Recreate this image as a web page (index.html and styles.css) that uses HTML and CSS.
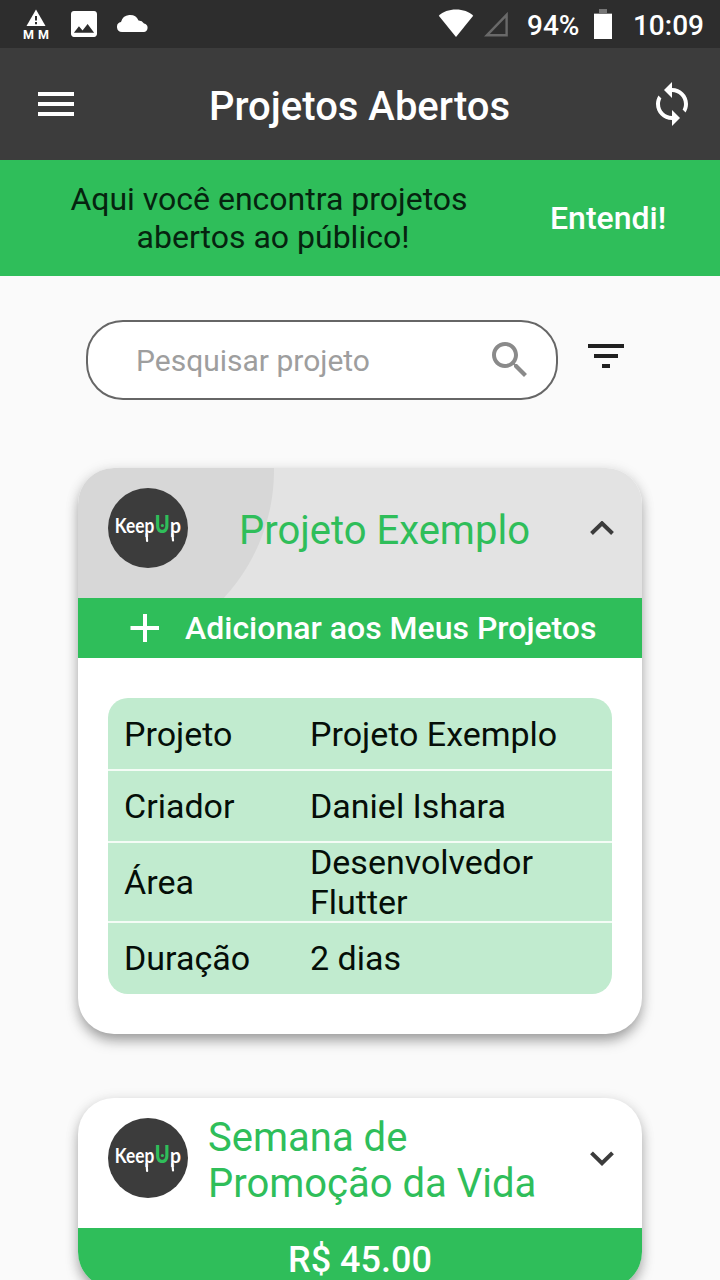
FILE: index.html
```html
<!DOCTYPE html>
<html lang="pt-BR">
<head>
<meta charset="utf-8">
<title>Projetos Abertos</title>
<link rel="stylesheet" href="styles.css">
</head>
<body>
<div class="screen">
  <div class="status">
    <svg class="alert" width="28" height="38" viewBox="0 -2 28 38">
      <path d="M14 .5 23.500 17h-19z" fill="#fff"/>
      <path d="M14 7v4.500M14 13v2.200" stroke="#2d2d2d" stroke-width="2"/>
      <text x="1" y="29.500" textLength="26">MM</text>
    </svg>
    <svg class="photo" width="26" height="26" viewBox="3 3 18 18"><path fill="#fff" d="M21 19V5c0-1.100-.9-2-2-2H5c-1.100 0-2 .9-2 2v14c0 1.100.9 2 2 2h14c1.100 0 2-.9 2-2zM8.500 13.500l2.500 3.010L14.500 12l4.500 6H5l3.500-4.500z"/></svg>
    <svg class="cloud" width="32" height="18" viewBox="0 0 32 18"><path fill="#fff" d="M5 18a5 5 0 0 1-1-9.900A9.300 9.300 0 0 1 21.500 6.500 6.300 6.300 0 0 1 27 9.400a4.400 4.400 0 0 1 .2 8.600z"/></svg>
    <svg class="wifi" width="36" height="28" viewBox="0 0 36 28"><path fill="#fff" d="M18 28 .8 6.700C5 2.700 11 .5 18 .5s13 2.200 17.200 6.200z"/></svg>
    <svg class="signal" width="24" height="25" viewBox="0 0 24 25"><path d="M22.600 2.800v20.500H2.800z" fill="none" stroke="#696969" stroke-width="2.400"/></svg>
    <span class="percent">94%</span>
    <svg class="battery" width="18" height="30" viewBox="0 0 18 30"><path fill="#767676" d="M5 0h8v4h5v2H0V4h5z"/><path fill="#fff" d="M0 5h18v25H0z"/></svg>
    <span class="clock">10:09</span>
  </div>
  <header class="appbar">
    <svg class="menu" width="36" height="24" viewBox="0 0 36 24"><path fill="#fff" d="M0 0h36v4H0zM0 10h36v4H0zM0 20h36v4H0z"/></svg>
    <h1>Projetos Abertos</h1>
    <svg width="48" height="48" viewBox="0 0 24 24"><path transform="matrix(-1 0 0 1 24 0)" fill="#fff" d="M12 4V1l4 4-4 4V6c-3.310 0-6 2.690-6 6 0 1.010.25 1.970.7 2.800l-1.460 1.460C4.460 15.030 4 13.570 4 12c0-4.420 3.580-8 8-8zm0 14c3.310 0 6-2.690 6-6 0-1.010-.25-1.970-.7-2.800l1.460-1.460C19.540 8.970 20 10.430 20 12c0 4.420-3.580 8-8 8v3l-4-4 4-4v3z"/></svg>
  </header>
  <div class="banner">
    <p>Aqui você encontra projetos<br><span>abertos ao público!</span></p>
    <b>Entendi!</b>
  </div>
  <div class="tools">
    <div class="search">
      <span>Pesquisar projeto</span>
      <svg width="48" height="48" viewBox="0 0 24 24"><path fill="#8a8a8a" d="M15.500 14h-.79l-.28-.27C15.410 12.590 16 11.110 16 9.500 16 5.910 13.090 3 9.500 3S3 5.910 3 9.500 5.910 16 9.500 16c1.610 0 3.090-.59 4.230-1.570l.27.28v.79l5 4.990L20.490 19l-4.990-5zm-6 0C7.010 14 5 11.990 5 9.500S7.010 5 9.500 5 14 7.010 14 9.500 11.990 14 9.500 14z"/></svg>
    </div>
    <svg width="36" height="24" viewBox="0 0 36 24"><path fill="#202020" d="M0 0h36v4H0zM6 10h24v4H6zM14 20h8v4h-8z"/></svg>
  </div>
  <article class="card">
    <div class="head pressed">
      <svg class="logo" viewBox="0 0 80 80">
        <circle cx="40" cy="40" r="40" fill="#3c3c3c"/>
        <text x="6.800" y="44.500" textLength="39.500" lengthAdjust="spacingAndGlyphs">Keep</text>
        <text class="logo-u" x="46.800" y="44.500" textLength="15" lengthAdjust="spacingAndGlyphs">U</text>
        <text x="62" y="44.500" textLength="11" lengthAdjust="spacingAndGlyphs">p</text>
        <path d="M38.600 46l.5 7M64.400 46l.6 6.500" stroke="#fff" stroke-width="2.200" stroke-linecap="round"/>
        <circle cx="54.400" cy="37.500" r="1.600" fill="#2fbe5a"/>
      </svg>
      <h2>Projeto Exemplo</h2>
      <svg width="24" height="15" viewBox="0 0 24 15"><path d="m1.500 12.500 10.500-10.200 10.500 10.200" fill="none" stroke="#3c3c3c" stroke-width="4"/></svg>
    </div>
    <div class="strip add">
      <svg width="29" height="28" viewBox="0 0 29 28"><path d="M15 0v28M.5 14h28.500" stroke="#fff" stroke-width="4"/></svg>
      <span>Adicionar aos Meus Projetos</span>
    </div>
    <dl class="details">
      <div class="first"><dt>Projeto</dt><dd>Projeto Exemplo</dd></div>
      <div><dt>Criador</dt><dd>Daniel Ishara</dd></div>
      <div class="tall"><dt>Área</dt><dd>Desenvolvedor<br>Flutter</dd></div>
      <div><dt>Duração</dt><dd>2 dias</dd></div>
    </dl>
  </article>
  <article class="card">
    <div class="head">
      <svg class="logo" viewBox="0 0 80 80">
        <circle cx="40" cy="40" r="40" fill="#3c3c3c"/>
        <text x="6.800" y="44.500" textLength="39.500" lengthAdjust="spacingAndGlyphs">Keep</text>
        <text class="logo-u" x="46.800" y="44.500" textLength="15" lengthAdjust="spacingAndGlyphs">U</text>
        <text x="62" y="44.500" textLength="11" lengthAdjust="spacingAndGlyphs">p</text>
        <path d="M38.600 46l.5 7M64.400 46l.6 6.500" stroke="#fff" stroke-width="2.200" stroke-linecap="round"/>
        <circle cx="54.400" cy="37.500" r="1.600" fill="#2fbe5a"/>
      </svg>
      <h2 class="left">Semana de<br>Promoção da Vida</h2>
      <svg width="24" height="15" viewBox="0 0 24 15"><path d="m1.500 1.800 10.500 10.400 10.500-10.400" fill="none" stroke="#3c3c3c" stroke-width="4"/></svg>
    </div>
    <div class="strip price">R$ 45.00</div>
  </article>
</div>
</body>
</html>
```
FILE: styles.css
```css
* { box-sizing: border-box; }
body, h1, h2, p, dl, dd { margin: 0; }
body { font-family: Roboto, "Liberation Sans", sans-serif; background: #fafafa; }
svg { display: block; flex: none; }
.screen { width: 720px; height: 1280px; overflow: hidden; background: #fafafa; }

.status {
  height: 48px;
  display: flex;
  align-items: center;
  background: #2d2d2d;
  color: #fff;
  font-size: 28px;
  font-weight: 500;
  padding: 2px 16px 0 22px;
}
.alert { margin-top: 2px; }
.alert text { font: 700 12.500px Roboto, sans-serif; fill: #fff; }
.photo { margin: -2px 0 0 21px; }
.cloud { margin: -5px 0 0 20px; }
.wifi { margin: -4px 0 0 289px; }
.signal { margin: -2px 0 0 10px; }
.percent { margin-left: 19px; width: 52px; white-space: nowrap; }
.battery { margin: -2px 0 0 15px; }
.clock { margin-left: auto; }

.appbar {
  height: 112px;
  background: #3c3c3c;
  color: #fff;
  display: flex;
  align-items: center;
  padding: 0 24px 0 38px;
}
.appbar h1 { flex: 1; text-align: center; font-size: 40px; font-weight: 500; line-height: 48px; padding: 5px 0 0; margin-left: -3px; }

.banner {
  height: 116px;
  background: #2fbe5a;
  display: flex;
  align-items: center;
  font-size: 32px;
  line-height: 38px;
}
.banner p { width: 538px; text-align: center; color: #06230f; }
.banner p span { padding-left: 8px; }
.banner b { flex: 1; color: #fff; font-weight: 500; padding-left: 12px; }

.tools { display: flex; align-items: center; gap: 30px; padding: 44px 0 0 86px; }
.tools > svg { margin-top: -8px; }
.search {
  width: 472px;
  height: 80px;
  border: 2px solid #666;
  border-radius: 37px;
  background: #fff;
  display: flex;
  align-items: center;
  justify-content: space-between;
  padding: 0 22px 0 48px;
  font-size: 30px;
  color: #9e9e9e;
}

.card {
  width: 564px;
  margin: 68px auto 0;
  background: #fff;
  border-radius: 36px;
  box-shadow: 0 8px 14px -2px rgba(0,0,0,.34), 0 2px 14px rgba(0,0,0,.12);
  overflow: hidden;
}
.card + .card { margin-top: 64px; }
.head { height: 130px; display: flex; align-items: center; padding: 0 28px 0 30px; }
.head > svg { margin-top: -10px; }
.pressed { background: radial-gradient(circle 188px at 8px 2px, #d7d7d7 187.500px, #e3e3e3 188.500px); }
.logo { width: 80px; height: 80px; }
.logo text { font: 700 21.500px Lato, sans-serif; fill: #fff; }
.logo .logo-u { fill: #2fbe5a; font-weight: 900; font-size: 25px; }
.head h2 { flex: 1; text-align: center; font-size: 40px; line-height: 46px; font-weight: 400; color: #2fbe5a; padding: 0 9px 6px 0; margin-top: 2px; }
.head h2.left { text-align: left; padding: 0 0 7px 20px; }
.strip { height: 60px; background: #2fbe5a; color: #fff; font-size: 32px; font-weight: 500; display: flex; align-items: center; }
.add { padding-left: 52px; gap: 26px; }
.price { justify-content: center; padding-top: 3px; font-size: 36px; }

.details { margin: 40px 30px; border-radius: 20px; overflow: hidden; background: #c1ebcf; font-size: 34px; line-height: 40px; color: #050e08; }
.details div { height: 72px; display: flex; align-items: center; padding-left: 16px; border-bottom: 2px solid #f4fcf6; }
.details .first { height: 73px; padding-top: 1px; }
.details .tall { height: 80px; }
.details div:last-child { height: 71px; padding-bottom: 1px; border-bottom: 0; }
.details dt { width: 186px; }
```
